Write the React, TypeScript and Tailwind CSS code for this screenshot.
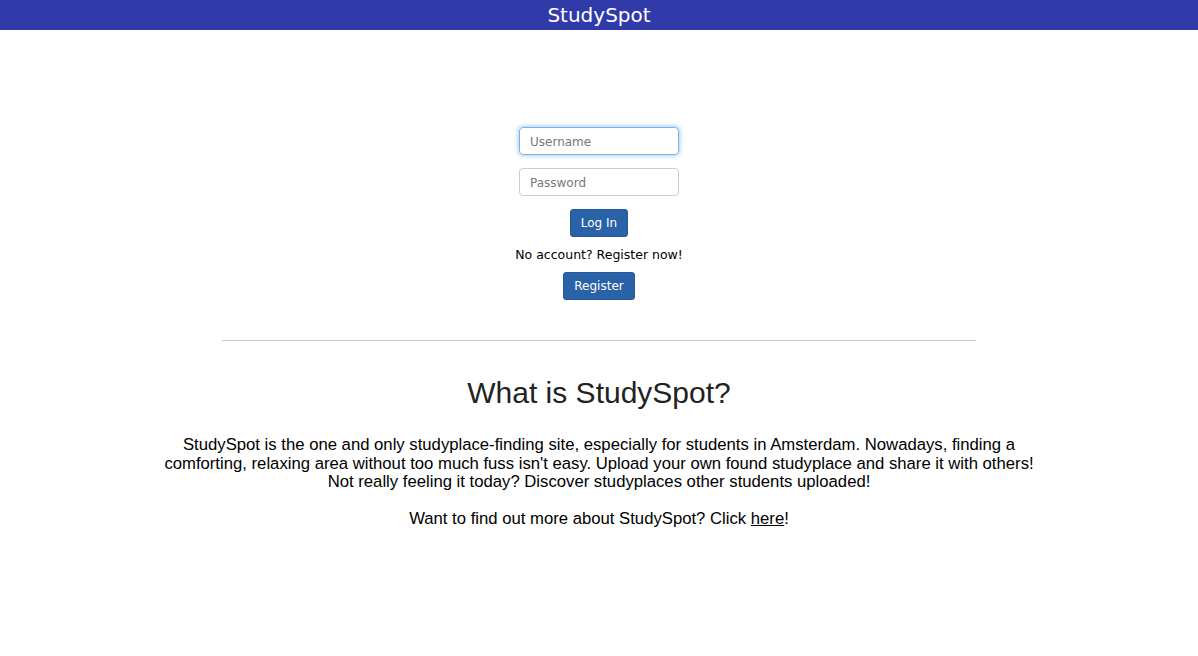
import { useEffect, useRef } from "react";

export default function App() {
  const userRef = useRef<HTMLInputElement>(null);

  useEffect(() => {
    userRef.current?.focus();
  }, []);

  return (
    <div className="min-h-screen bg-white">
      {/* Header */}
      <header className="h-[30px] bg-[#303aa8] flex items-center justify-center">
        <h1 className="text-white text-[20px] leading-none font-['DejaVu_Sans',Verdana,sans-serif]">StudySpot</h1>
      </header>

      {/* Login form */}
      <section className="flex flex-col items-center pt-[97px] font-['DejaVu_Sans',Verdana,sans-serif] text-[12.5px]">
        <input
          ref={userRef}
          type="text"
          placeholder="Username"
          className="w-[160px] h-[28px] px-[10px] pt-[2px] rounded-[4px] border border-[#ccc] text-[12px] text-[#333] placeholder:text-[#777] outline-none focus:border-[#7eb3e8] focus:shadow-[0_0_4px_1px_rgba(102,175,233,0.6)]"
        />
        <input
          type="password"
          placeholder="Password"
          className="mt-[13px] w-[160px] h-[28px] px-[10px] pt-[2px] rounded-[4px] border border-[#ccc] text-[12px] text-[#333] placeholder:text-[#777] outline-none focus:border-[#7eb3e8]"
        />
        <button className="mt-[13px] h-[28px] px-[10px] rounded-[3px] bg-[#2a62a8] border border-[#24589a] text-white text-[12px]">
          Log In
        </button>
        <p className="mt-[9px] text-black leading-[18px]">No account? Register now!</p>
        <button className="mt-[8px] h-[28px] px-[10px] rounded-[3px] bg-[#2a62a8] border border-[#24589a] text-white text-[12px]">
          Register
        </button>
      </section>

      <hr className="mt-[40px] mx-auto w-[754px] border-t border-[#c8c8c8]" />

      {/* About */}
      <section className="text-center text-[#222] font-['Liberation_Sans',Arial,sans-serif]">
        <h2 className="mt-[33px] text-[30px] leading-[38px]">What is StudySpot?</h2>
        <div className="mt-[24px] mx-auto max-w-[880px] text-[16.7px] leading-[18.5px] text-black">
          <p>
            StudySpot is the one and only studyplace-finding site, especially for students in Amsterdam. Nowadays, finding a
            comforting, relaxing area without too much fuss isn't easy. Upload your own found studyplace and share it with others!
            Not really feeling it today? Discover studyplaces other students uploaded!
          </p>
          <p className="mt-[18px]">
            Want to find out more about StudySpot? Click <a href="#" className="underline">here</a>!
          </p>
        </div>
      </section>
    </div>
  );
}
